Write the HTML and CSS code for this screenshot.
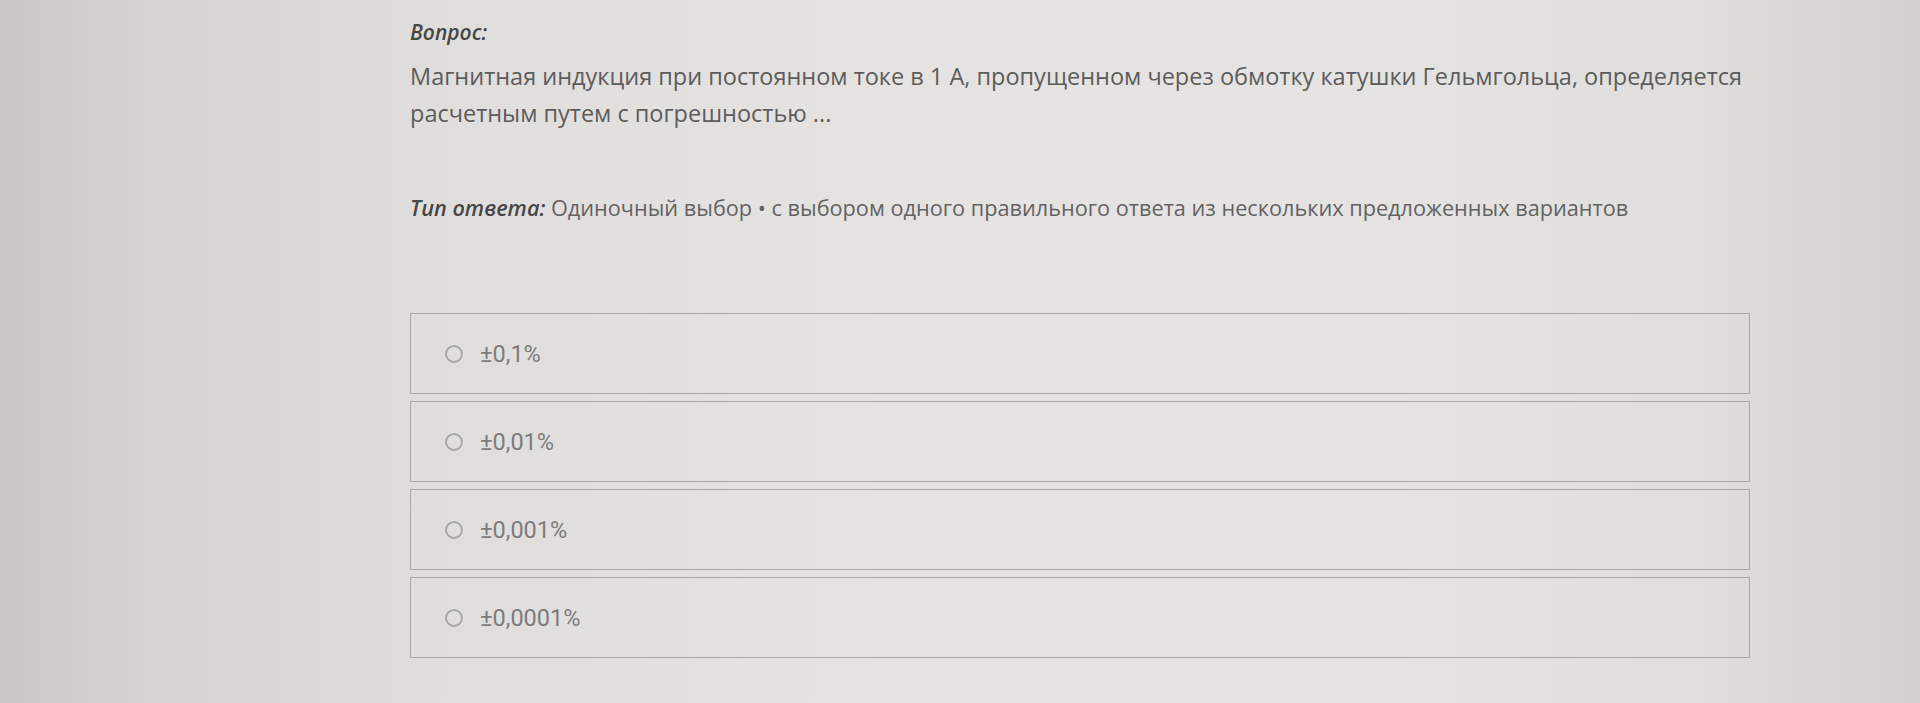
FILE: index.html
```html
<!DOCTYPE html>
<html lang="ru">
<head>
<meta charset="utf-8">
<title>Вопрос</title>
<link rel="stylesheet" href="styles.css">
</head>
<body>
<main class="page">
  <section class="question">
    <div class="q-label">Вопрос:</div>
    <p class="q-text">Магнитная индукция при постоянном токе в 1 А, пропущенном через обмотку катушки Гельмгольца, определяется расчетным путем с погрешностью ...</p>
    <p class="q-type"><span class="q-type-label">Тип ответа:</span> Одиночный выбор • с выбором одного правильного ответа из нескольких предложенных вариантов</p>
  </section>
  <ul class="options">
    <li class="option"><span class="radio"></span><span class="opt-text">±0,1%</span></li>
    <li class="option"><span class="radio"></span><span class="opt-text">±0,01%</span></li>
    <li class="option"><span class="radio"></span><span class="opt-text">±0,001%</span></li>
    <li class="option"><span class="radio"></span><span class="opt-text">±0,0001%</span></li>
  </ul>
</main>
</body>
</html>
```
FILE: styles.css
```css
html, body {
  margin: 0;
  padding: 0;
  height: 100%;
}
body {
  background: linear-gradient(90deg, #cac8c7 0%, #d6d4d3 8%, #e0dedd 22%, #e5e3e2 45%, #e6e4e3 70%, #e1dfde 88%, #d3d1d0 100%);
  font-family: "Open Sans", "Noto Sans", sans-serif;
  color: #5c5c5c;
  overflow: hidden;
}
.page {
  width: 1340px;
  margin-left: 410px;
  padding-top: 18px;
}
.q-label {
  font-size: 21px;
  font-weight: 600;
  font-style: italic;
  color: #474747;
  line-height: 28px;
}
.q-text {
  margin: 12px 0 0;
  font-size: 23.5px;
  line-height: 37px;
  color: #5c5c5c;
}
.q-type {
  margin: 61px 0 0;
  font-size: 21.7px;
  line-height: 30px;
  color: #626262;
}
.q-type-label {
  font-weight: 600;
  font-style: italic;
  color: #474747;
}
.options {
  list-style: none;
  margin: 90px 0 0;
  padding: 0;
  display: flex;
  flex-direction: column;
  gap: 7px;
}
.option {
  display: flex;
  align-items: center;
  height: 79px;
  border: 1px solid #a9a7a6;
  padding-left: 34px;
  font-family: Roboto, "Noto Sans", sans-serif;
  font-size: 23.5px;
  color: #7c7c7c;
}
.radio {
  width: 14px;
  height: 14px;
  border: 2px solid #a6a6a6;
  border-radius: 50%;
  margin-right: 17px;
  flex: none;
}
```
